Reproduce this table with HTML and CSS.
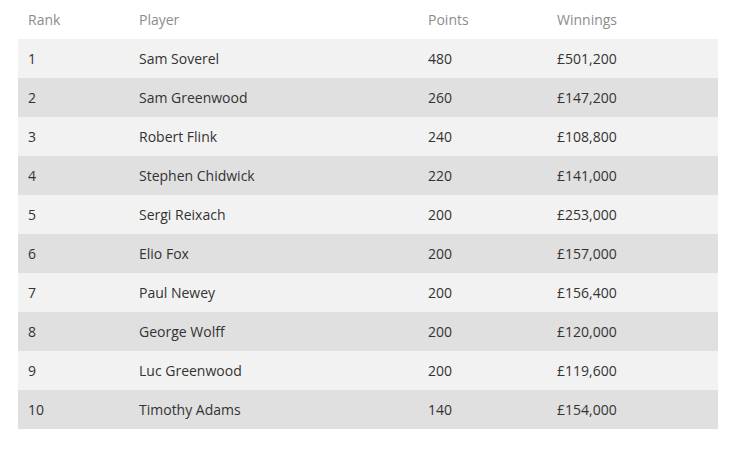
FILE: index.html
```html
<!DOCTYPE html>
<html>
<head>
<meta charset="utf-8">
<link rel="stylesheet" href="styles.css">
</head>
<body>
<table class="standings">
  <colgroup>
    <col class="c-rank"><col class="c-player"><col class="c-points"><col class="c-win">
  </colgroup>
  <thead>
    <tr><th>Rank</th><th>Player</th><th>Points</th><th>Winnings</th></tr>
  </thead>
  <tbody>
    <tr><td>1</td><td>Sam Soverel</td><td>480</td><td>£501,200</td></tr>
    <tr><td>2</td><td>Sam Greenwood</td><td>260</td><td>£147,200</td></tr>
    <tr><td>3</td><td>Robert Flink</td><td>240</td><td>£108,800</td></tr>
    <tr><td>4</td><td>Stephen Chidwick</td><td>220</td><td>£141,000</td></tr>
    <tr><td>5</td><td>Sergi Reixach</td><td>200</td><td>£253,000</td></tr>
    <tr><td>6</td><td>Elio Fox</td><td>200</td><td>£157,000</td></tr>
    <tr><td>7</td><td>Paul Newey</td><td>200</td><td>£156,400</td></tr>
    <tr><td>8</td><td>George Wolff</td><td>200</td><td>£120,000</td></tr>
    <tr><td>9</td><td>Luc Greenwood</td><td>200</td><td>£119,600</td></tr>
    <tr><td>10</td><td>Timothy Adams</td><td>140</td><td>£154,000</td></tr>
  </tbody>
</table>
</body>
</html>
```
FILE: styles.css
```css
html, body {
  margin: 0;
  padding: 0;
  background: #ffffff;
}
body {
  padding: 0 18px;
  font-family: "Open Sans", "Liberation Sans", sans-serif;
  font-size: 14px;
  color: #333333;
}
.standings {
  width: 700px;
  border-collapse: collapse;
  table-layout: fixed;
}
.c-rank { width: 111px; }
.c-player { width: 289px; }
.c-points { width: 129px; }
.c-win { width: 171px; }
.standings th,
.standings td {
  height: 39px;
  padding: 0 10px;
  text-align: left;
  vertical-align: middle;
  box-sizing: border-box;
  white-space: nowrap;
}
.standings th {
  font-weight: normal;
  color: #8c8c8c;
}
.standings tbody tr:nth-child(odd) { background: #f2f2f2; }
.standings tbody tr:nth-child(even) { background: #e0e0e0; }
```
